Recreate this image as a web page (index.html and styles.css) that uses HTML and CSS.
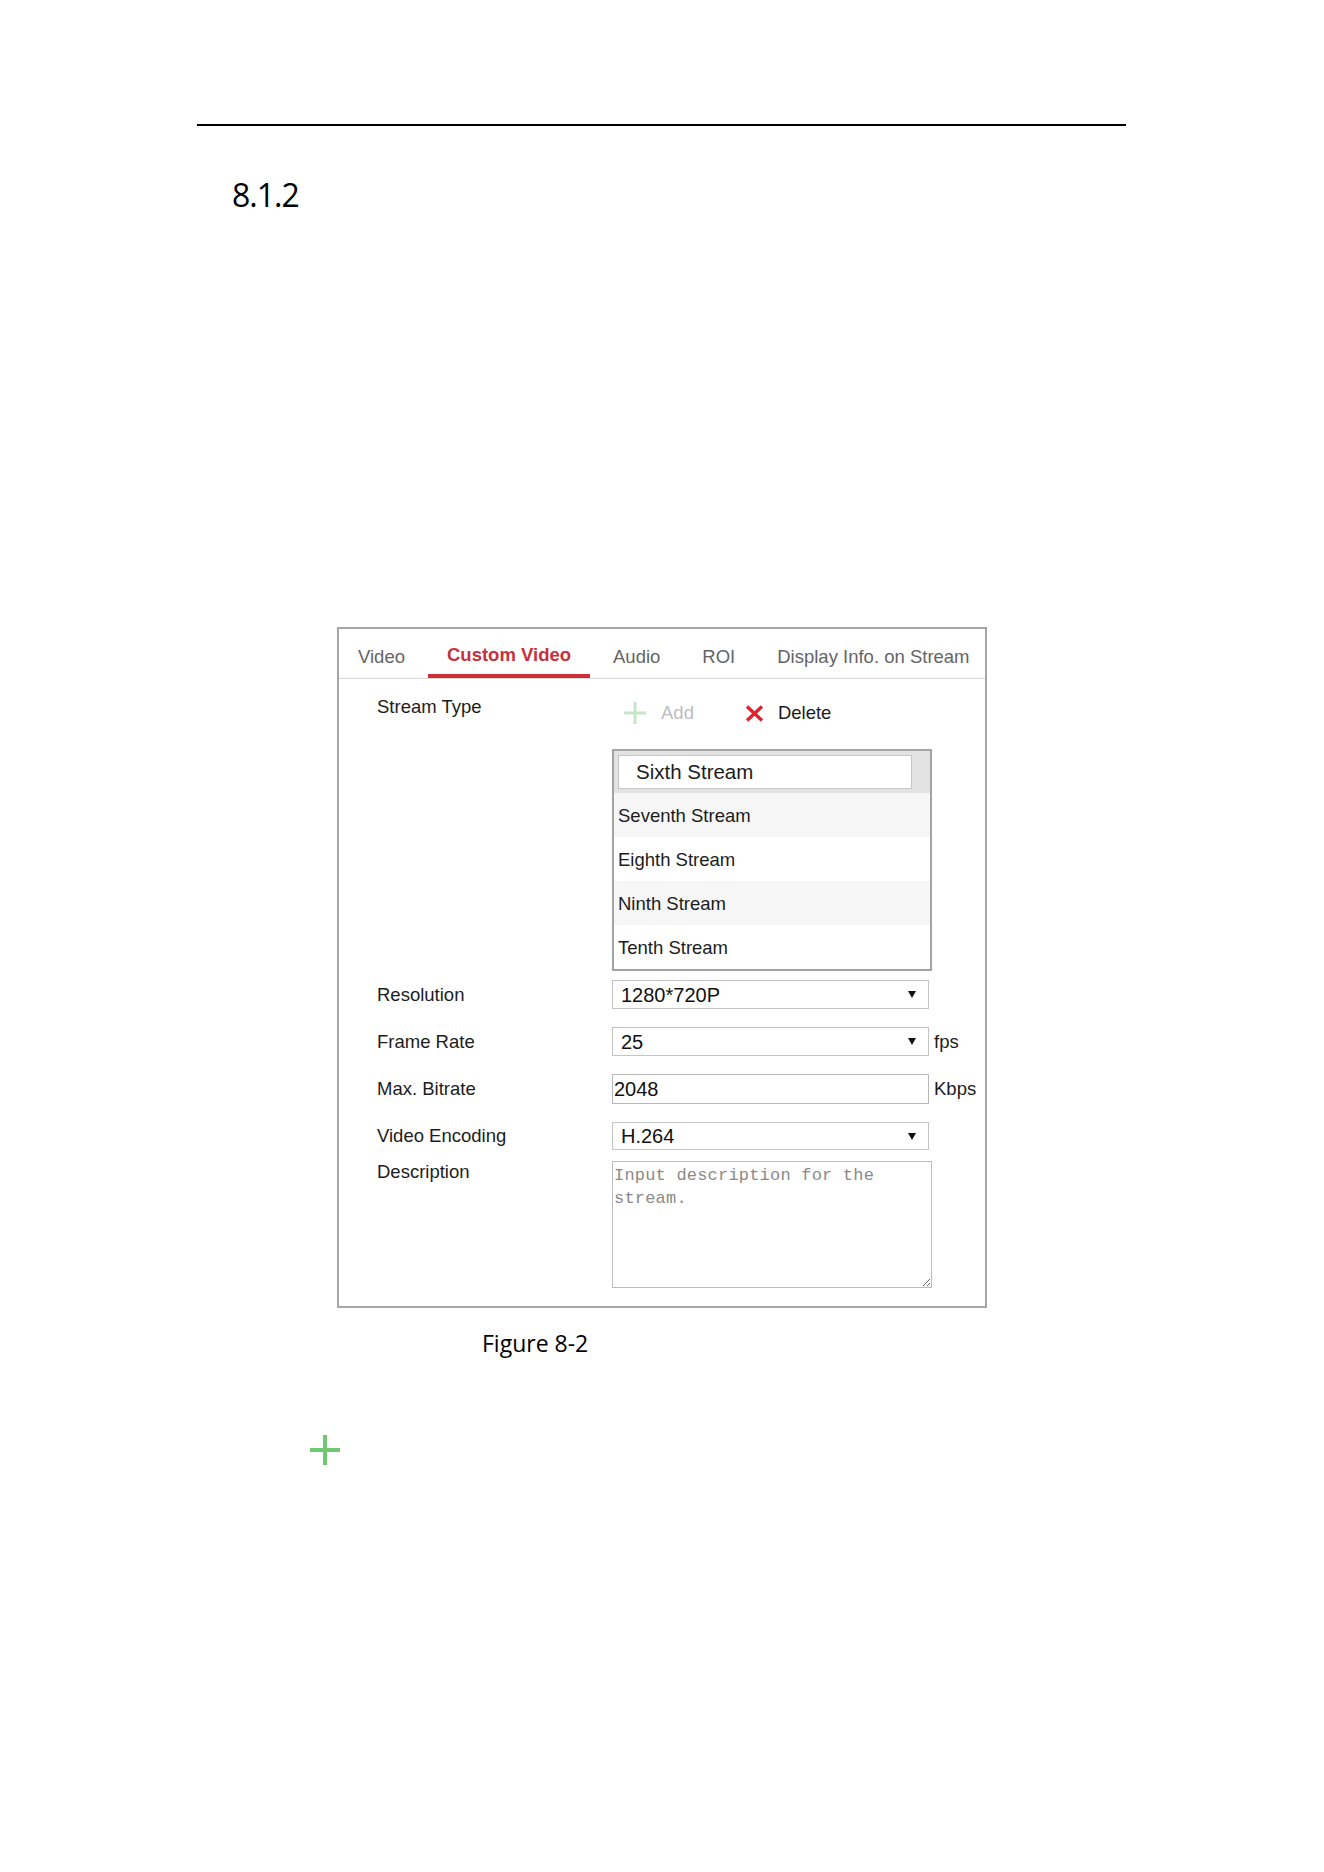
FILE: index.html
```html
<!DOCTYPE html>
<html>
<head>
    <title>Custom Video</title>
    <link rel="stylesheet" href="styles.css">
</head>
<body>
    <div class="page">
        <div class="rule"></div>
        <h2 class="section-no">8.1.2</h2>

        <div class="panel">
            <ul class="tabs">
                <li>Video</li>
                <li class="active">Custom Video</li>
                <li>Audio</li>
                <li>ROI</li>
                <li>Display Info. on Stream</li>
            </ul>

            <div class="form">
                <div class="row stream-row">
                    <label>Stream Type</label>
                    <div>
                        <div class="toolbar">
                            <span class="tool disabled">
                                <svg width="24" height="24" viewBox="0 0 24 24">
                                    <path d="M12 1v22M1 12h22" stroke="#c6e7c6" stroke-width="3" fill="none"/>
                                </svg>
                                Add
                            </span>
                            <span class="tool">
                                <svg width="19" height="17" viewBox="0 0 19 17">
                                    <path d="M2 1.5l15 14M17 1.5l-15 14" stroke="#e2212b" stroke-width="3.4" fill="none"/>
                                </svg>
                                Delete
                            </span>
                        </div>
                        <div class="stream-list">
                            <div class="item selected"><div class="edit">Sixth Stream</div></div>
                            <div class="item odd">Seventh Stream</div>
                            <div class="item">Eighth Stream</div>
                            <div class="item odd">Ninth Stream</div>
                            <div class="item">Tenth Stream</div>
                        </div>
                    </div>
                </div>

                <div class="row resolution-row">
                    <label>Resolution</label>
                    <div class="control">
                        <div class="select"><span>1280*720P</span><i class="arrow"></i></div>
                    </div>
                </div>

                <div class="row spaced">
                    <label>Frame Rate</label>
                    <div class="control">
                        <div class="select"><span>25</span><i class="arrow"></i></div>
                        <span class="unit">fps</span>
                    </div>
                </div>

                <div class="row spaced">
                    <label>Max. Bitrate</label>
                    <div class="control">
                        <input type="text" class="text-input" value="2048">
                        <span class="unit">Kbps</span>
                    </div>
                </div>

                <div class="row spaced">
                    <label>Video Encoding</label>
                    <div class="control">
                        <div class="select short"><span>H.264</span><i class="arrow"></i></div>
                    </div>
                </div>

                <div class="row desc-row">
                    <label>Description</label>
                    <textarea placeholder="Input description for the stream."></textarea>
                </div>
            </div>
        </div>

        <p class="caption">Figure 8-2</p>

        <svg class="big-plus" width="30" height="30" viewBox="0 0 30 30">
            <path d="M15 0v30M0 15h30" stroke="#70c870" stroke-width="4" fill="none"/>
        </svg>
    </div>
</body>
</html>
```

FILE: styles.css
```css
body {
    margin: 0;
    background: #fff;
    font-family: "Liberation Sans", Arial, sans-serif;
}
.page {
    width: 929px;
    margin-left: 197px;
    padding-top: 124px;
}
.rule {
    height: 2px;
    background: #000;
}
.section-no {
    margin: 49px 0 0 35px;
    font-family: "Open Sans", sans-serif;
    font-size: 32px;
    font-weight: normal;
    letter-spacing: -1px;
    line-height: 40px;
    color: #000;
}

/* settings panel */
.panel {
    width: 650px;
    box-sizing: border-box;
    margin: 412px 0 0 140px;
    border: 2px solid #a6a6a6;
    font-size: 18.5px;
    line-height: 22px;
    color: #1c1c1c;
}
.tabs {
    display: flex;
    gap: 4px;
    margin: 0;
    padding: 0;
    list-style: none;
    border-bottom: 1px solid #d9d9d9;
}
.tabs li {
    flex-shrink: 0;
    white-space: nowrap;
    padding: 17px 19px 6px;
    border-bottom: 4px solid transparent;
    color: #646464;
}
.tabs li.active {
    padding-top: 15px;
    padding-bottom: 8px;
    font-weight: bold;
    color: #c9303b;
    border-bottom-color: #cd2e38;
}

.form {
    padding: 17px 0 18px 38px;
}
.row {
    display: grid;
    grid-template-columns: 235px auto;
    align-items: center;
}
.stream-row {
    align-items: start;
}
.resolution-row {
    margin-top: 9px;
}
.row.spaced {
    margin-top: 18px;
}
.desc-row {
    margin-top: 11px;
    align-items: start;
}

.toolbar {
    display: flex;
    align-items: center;
    height: 24px;
    margin-top: 5px;
    padding-left: 11px;
}
.tool {
    display: flex;
    align-items: center;
    gap: 14px;
    color: #1c1c1c;
}
.tool + .tool {
    margin-left: 51px;
}
.tool.disabled {
    color: #bdbdbd;
}

.stream-list {
    width: 320px;
    box-sizing: border-box;
    margin-top: 24px;
    border: 2px solid #a3a3a3;
}
.item {
    height: 44px;
    box-sizing: border-box;
    padding: 2px 0 0 4px;
    line-height: 42px;
    background: #fff;
}
.item.odd {
    background: #f6f6f6;
}
.item.selected {
    height: 42px;
    padding: 4px 0 0 4px;
    background: #e3e3e3;
}
.edit {
    width: 294px;
    height: 34px;
    box-sizing: border-box;
    padding-left: 17px;
    border: 1px solid #c6c6c6;
    background: #fff;
    font-size: 20.5px;
    line-height: 32px;
}

.control {
    display: flex;
    align-items: center;
    gap: 5px;
}
.select {
    display: flex;
    align-items: center;
    justify-content: space-between;
    width: 317px;
    height: 29px;
    box-sizing: border-box;
    padding: 0 12px 0 8px;
    border: 1px solid #c4c4c4;
    font-size: 20px;
    color: #111;
}
.select.short {
    height: 28px;
}
.arrow {
    width: 0;
    height: 0;
    border-left: 4px solid transparent;
    border-right: 4px solid transparent;
    border-top: 7px solid #111;
}
.text-input {
    width: 317px;
    height: 30px;
    box-sizing: border-box;
    margin: 0;
    padding: 0 1px;
    border: 1px solid #b9b9b9;
    font-family: "Liberation Sans", Arial, sans-serif;
    font-size: 20px;
    color: #111;
    outline: none;
}
.unit {
    color: #1c1c1c;
}
textarea {
    display: block;
    width: 320px;
    height: 127px;
    box-sizing: border-box;
    margin: 0;
    padding: 2px 1px;
    border: 1px solid #bdbdbd;
    font-family: "Liberation Mono", monospace;
    font-size: 17px;
    letter-spacing: 0.2px;
    line-height: 23px;
    outline: none;
}
textarea::placeholder {
    color: #8a8a8a;
}

.caption {
    margin: 20px 0 0 285px;
    font-family: "Open Sans", sans-serif;
    font-size: 23px;
    line-height: 30px;
    color: #000;
}
.big-plus {
    display: block;
    margin: 77px 0 0 113px;
}
```
